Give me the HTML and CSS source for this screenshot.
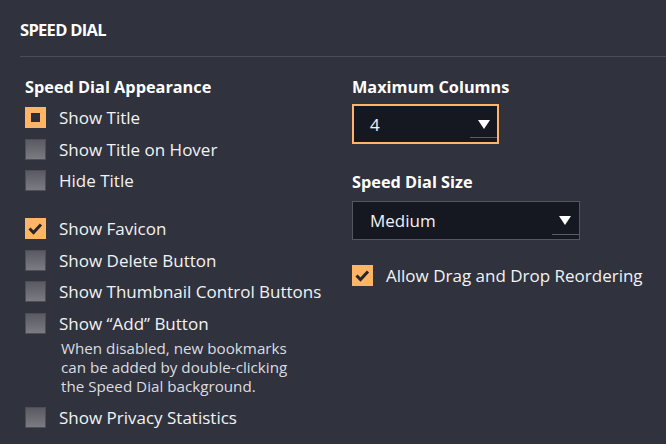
FILE: index.html
```html
<!DOCTYPE html>
<html lang="en">
<head>
    <meta charset="UTF-8">
    <title>Speed Dial</title>
    <link rel="stylesheet" href="styles.css">
</head>
<body>
    <div class="settings-page">
        <h2 class="section-title">SPEED DIAL</h2>

        <div class="section-body">
            <!-- Left column -->
            <div class="column column-left">
                <h3 class="group-title">Speed Dial Appearance</h3>
                <div class="option"><span class="box box-radio"></span><span class="label">Show Title</span></div>
                <div class="option"><span class="box"></span><span class="label">Show Title on Hover</span></div>
                <div class="option"><span class="box"></span><span class="label">Hide Title</span></div>

                <div class="option option-gap"><span class="box box-checked"><svg viewBox="0 0 21 21" width="21" height="21"><path d="M4.5 10.5 L8.5 14.5 L16 6.5" fill="none" stroke="#25262d" stroke-width="3"/></svg></span><span class="label">Show Favicon</span></div>
                <div class="option"><span class="box"></span><span class="label">Show Delete Button</span></div>
                <div class="option"><span class="box"></span><span class="label">Show Thumbnail Control Buttons</span></div>
                <div class="option">
                    <span class="box"></span>
                    <div>
                        <span class="label">Show “Add” Button</span>
                        <p class="hint">When disabled, new bookmarks<br>can be added by double-clicking<br>the Speed Dial background.</p>
                    </div>
                </div>
                <div class="option"><span class="box"></span><span class="label">Show Privacy Statistics</span></div>
            </div>

            <!-- Right column -->
            <div class="column column-right">
                <h3 class="group-title">Maximum Columns</h3>
                <div class="select select-focus select-small">
                    <span>4</span>
                    <span class="arrow"></span>
                </div>

                <h3 class="group-title group-title-next">Speed Dial Size</h3>
                <div class="select select-wide">
                    <span>Medium</span>
                    <span class="arrow"></span>
                </div>

                <div class="option option-right"><span class="box box-checked"><svg viewBox="0 0 21 21" width="21" height="21"><path d="M4.5 10.5 L8.5 14.5 L16 6.5" fill="none" stroke="#25262d" stroke-width="3"/></svg></span><span class="label">Allow Drag and Drop Reordering</span></div>
            </div>
        </div>
    </div>
</body>
</html>
```

FILE: styles.css
```css
body {
    margin: 0;
    padding: 0;
    background-color: #30323d;
    color: #f2f2f4;
    font-family: "Open Sans", "Noto Sans", sans-serif;
    font-size: 17px;
}

.settings-page {
    width: 666px;
    height: 444px;
    overflow: hidden;
}

.section-title {
    margin: 0 0 0 20px;
    padding-top: 19px;
    height: 37px;
    line-height: 22px;
    font-size: 16.5px;
    letter-spacing: -0.7px;
    font-weight: 700;
    color: #ffffff;
    border-bottom: 1px solid #4b4c57;
    box-sizing: content-box;
}

.section-body {
    display: grid;
    grid-template-columns: 327px 1fr;
    padding-left: 25px;
}

.group-title {
    margin: 19px 0 9px 0;
    height: 22px;
    line-height: 22px;
    font-size: 16.3px;
    font-weight: 700;
    color: #ffffff;
}

.column-right .group-title {
    margin: 19px 0 6px 0;
}

.column-right .group-title-next {
    margin-top: 27px;
    margin-bottom: 8px;
}

.option {
    display: flex;
    align-items: flex-start;
    gap: 13px;
    margin-bottom: 10.6px;
}

.option-gap {
    margin-top: 27px;
}

.option-right {
    margin-top: 25px;
}

.box {
    width: 21px;
    height: 21px;
    flex-shrink: 0;
    box-sizing: border-box;
    border: 1px solid #4d4e57;
    background: linear-gradient(#595a62, #7b7c82);
    display: flex;
    align-items: center;
    justify-content: center;
}

.box-checked {
    border: none;
    background: #ffb466;
}

.box-radio {
    border: none;
    background: #ffb466;
}

.box-radio::after {
    content: "";
    width: 9px;
    height: 9px;
    background: #2b2d38;
}

.label {
    display: block;
    line-height: 21px;
    white-space: nowrap;
}

.hint {
    margin: 5px 0 0 2px;
    font-size: 15.2px;
    line-height: 19px;
    color: #dcdce0;
}

.select {
    position: relative;
    display: flex;
    align-items: center;
    justify-content: space-between;
    box-sizing: border-box;
    height: 40px;
    padding: 0 8px 0 17px;
    background-color: #161821;
    border: 1px solid #55565f;
    color: #f2f2f4;
}

.select-focus {
    border: 2px solid #ffb466;
    padding-left: 16px;
    padding-right: 7px;
}

.select-small {
    width: 147px;
}

.select-wide {
    width: 228px;
    height: 39px;
}

.select::after {
    content: "";
    position: absolute;
    right: 0;
    bottom: 4px;
    width: 27px;
    height: 1px;
    background: #5b5c66;
}

.arrow {
    width: 0;
    height: 0;
    border-left: 6px solid transparent;
    border-right: 6px solid transparent;
    border-top: 9px solid #ffffff;
}
```
